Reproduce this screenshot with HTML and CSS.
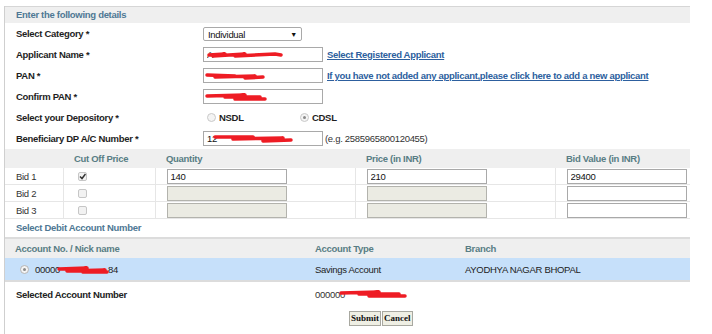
FILE: index.html
```html
<!DOCTYPE html>
<html lang="en">
<head>
<meta charset="UTF-8">
<title>IPO Application</title>
<link rel="stylesheet" href="styles.css">
</head>
<body>

<div class="panel">
  <div class="section-head">Enter the following details</div>

  <div class="form-grid">
    <div class="lbl">Select Category *</div>
    <div class="fld">
      <div class="select">Individual <span class="caret">&#9660;</span></div>
    </div>

    <div class="lbl">Applicant Name *</div>
    <div class="fld">
      <div class="masked">
        <input class="txt" type="text" value="A">
        <svg class="scribble" width="80" height="10" viewBox="0 0 80 10"><path d="M4 5 L20 4 L8 6 L40 4 L30 6 L70 4 L76 5" /></svg>
      </div>
      <a class="link" href="#">Select Registered Applicant</a>
    </div>

    <div class="lbl">PAN *</div>
    <div class="fld">
      <div class="masked">
        <input class="txt" type="text" value="">
        <svg class="scribble" width="80" height="10" viewBox="0 0 80 10"><path d="M2 4 L30 5 L10 6 L50 5 L40 7 L58 6" /></svg>
      </div>
      <a class="link" href="#">If you have not added any applicant,please click here to add a new applicant</a>
    </div>

    <div class="lbl">Confirm PAN *</div>
    <div class="fld">
      <div class="masked">
        <input class="txt" type="text" value="">
        <svg class="scribble" width="80" height="10" viewBox="0 0 80 10"><path d="M2 4 L40 3 L20 5 L55 5 L30 7 L60 7" /></svg>
      </div>
    </div>

    <div class="lbl">Select your Depository *</div>
    <div class="fld">
      <label class="opt"><span class="radio"></span>NSDL</label>
      <label class="opt opt-cdsl"><span class="radio on"></span>CDSL</label>
    </div>

    <div class="lbl">Beneficiary DP A/C Number *</div>
    <div class="fld">
      <div class="masked">
        <input class="txt" type="text" value="12">
        <svg class="scribble sc-dp" width="80" height="10" viewBox="0 0 80 10"><path d="M2 3 L40 3 L20 5 L70 4 L50 7 L78 6" /></svg>
      </div>
      <span class="hint">(e.g. 2585965800120455)</span>
    </div>
  </div>

  <table class="bids">
    <colgroup>
      <col class="c-bid"><col class="c-cut"><col class="c-qty"><col class="c-price"><col class="c-val">
    </colgroup>
    <tr class="head">
      <th></th><th>Cut Off Price</th><th>Quantity</th><th>Price (in INR)</th><th>Bid Value (in INR)</th>
    </tr>
    <tr>
      <td>Bid 1</td>
      <td><span class="check on"><svg width="7" height="7" viewBox="0 0 7 7"><path d="M1 3.5 L3 5.5 L6.5 1" /></svg></span></td>
      <td><input class="txt" type="text" value="140"></td>
      <td><input class="txt" type="text" value="210"></td>
      <td><input class="txt" type="text" value="29400"></td>
    </tr>
    <tr>
      <td>Bid 2</td>
      <td><span class="check"></span></td>
      <td><input class="txt off" type="text" disabled></td>
      <td><input class="txt off" type="text" disabled></td>
      <td><input class="txt" type="text"></td>
    </tr>
    <tr>
      <td>Bid 3</td>
      <td><span class="check"></span></td>
      <td><input class="txt off" type="text" disabled></td>
      <td><input class="txt off" type="text" disabled></td>
      <td><input class="txt" type="text"></td>
    </tr>
  </table>

  <div class="sub-head">Select Debit Account Number</div>

  <table class="accounts">
    <colgroup>
      <col class="c-acc"><col class="c-type"><col class="c-branch">
    </colgroup>
    <tr class="head">
      <th>Account No. / Nick name</th><th>Account Type</th><th>Branch</th>
    </tr>
    <tr class="picked">
      <td class="acc-no">
        <span class="radio on"></span>
        <span class="masked">00000<span class="blank"></span>84
          <svg class="scribble sc-acc" width="60" height="10" viewBox="0 0 60 10"><path d="M2 4 L30 3 L10 6 L48 5 L26 7 L50 7" /></svg>
        </span>
      </td>
      <td>Savings Account</td>
      <td>AYODHYA NAGAR BHOPAL</td>
    </tr>
  </table>

  <div class="selected">
    <div class="sel-lbl">Selected Account Number</div>
    <div class="sel-val masked">000000
      <svg class="scribble sc-sel" width="96" height="10" viewBox="0 0 96 10"><path d="M2 4 L40 3 L20 5 L60 5 L30 7 L66 7" /></svg>
    </div>
  </div>

  <div class="actions">
    <button class="btn">Submit</button><button class="btn">Cancel</button>
  </div>
</div>

</body>
</html>
```

FILE: styles.css
```css
body {
  margin: 0;
  font-family: "Liberation Sans", Arial, sans-serif;
  font-size: 9.5px;
  letter-spacing: -0.3px;
  color: #222;
  background: #fff;
}
.panel {
  margin: 6px 0 0 4px;
  width: 686px;
  height: 328px;
  border-left: 1px solid #cfcfcf;
  box-sizing: border-box;
}
.section-head {
  height: 16px;
  line-height: 16px;
  background: #efefef;
  border-top: 1px solid #d6d6d6;
  padding-left: 11px;
  color: #4e7894;
  font-weight: bold;
}
.form-grid {
  display: grid;
  grid-template-columns: 187px 1fr;
  grid-auto-rows: 21px;
  padding-left: 11px;
}
.lbl {
  font-weight: bold;
  color: #1e1e1e;
  display: flex;
  align-items: center;
}
.fld {
  display: flex;
  align-items: center;
}
.select {
  width: 99px;
  height: 14px;
  line-height: 13px;
  border: 1px solid #a9a9a9;
  border-radius: 2px;
  padding-left: 4px;
  box-sizing: border-box;
  position: relative;
  color: #111;
}
.caret {
  position: absolute;
  right: 4px;
  top: 0;
  font-size: 7px;
}
.masked {
  position: relative;
  display: inline-block;
}
.txt {
  width: 120px;
  height: 15px;
  border: 1px solid #a9a9a9;
  padding: 0 3px;
  box-sizing: border-box;
  font-family: "Liberation Sans", Arial, sans-serif;
  font-size: 9.5px;
  letter-spacing: -0.3px;
  color: #111;
  background: #fff;
  display: block;
}
.txt.off {
  background: #ebebe3;
  border-color: #b3b3ad;
}
.scribble {
  position: absolute;
  left: 2px;
  top: 3px;
}
.scribble path {
  fill: none;
  stroke: #ee1c24;
  stroke-width: 3.5;
  stroke-linecap: round;
  stroke-linejoin: round;
}
.sc-dp {
  left: 10px;
}
.link {
  margin-left: 4px;
  color: #2d5f9e;
  font-weight: bold;
}
.hint {
  margin-left: 2px;
  color: #333;
}
.opt {
  display: flex;
  align-items: center;
  font-weight: bold;
  color: #1e1e1e;
  margin-left: 4px;
  width: 89px;
}
.radio {
  display: inline-block;
  width: 7px;
  height: 7px;
  border: 1px solid #c9c9c9;
  border-radius: 50%;
  background: #f4f4f4;
  margin-right: 3px;
  position: relative;
}
.radio.on::after {
  content: "";
  position: absolute;
  left: 2px;
  top: 2px;
  width: 3px;
  height: 3px;
  border-radius: 50%;
  background: #8a8a8a;
}
.bids, .accounts {
  width: 685px;
  border-collapse: collapse;
  table-layout: fixed;
}
.c-bid { width: 58px; }
.c-cut { width: 92px; }
.c-qty { width: 200px; }
.c-price { width: 200px; }
.c-val { width: 135px; }
.bids th {
  height: 19px;
  background: #efefef;
  text-align: left;
  padding: 0 0 0 11px;
  color: #587d84;
  font-weight: bold;
}
.bids td {
  height: 16px;
  padding: 0 0 0 11px;
  border-bottom: 1px solid #e6e6e6;
  border-left: 1px solid #e6e6e6;
  color: #333;
}
.bids td:first-child {
  border-left: none;
}
.check {
  display: block;
  width: 9px;
  height: 9px;
  margin-left: 3px;
  border: 1px solid #c6c6c6;
  border-radius: 2px;
  background: #f2f2f2;
  box-sizing: border-box;
  position: relative;
}
.check svg {
  position: absolute;
  left: 0;
  top: 0;
}
.check path {
  fill: none;
  stroke: #333;
  stroke-width: 1.5;
}
.sub-head {
  height: 18px;
  line-height: 18px;
  padding-left: 11px;
  color: #4e7894;
  font-weight: bold;
}
.c-acc { width: 300px; }
.c-type { width: 150px; }
.c-branch { width: 235px; }
.accounts {
  border-top: 2px solid #dcdcdc;
  border-bottom: 2px solid #dcdcdc;
}
.accounts th {
  height: 19px;
  background: #efefef;
  text-align: left;
  padding: 0 0 0 10px;
  color: #587d84;
  font-weight: bold;
}
.accounts td {
  height: 22px;
  padding: 0 0 0 10px;
  color: #222;
}
.picked td {
  background: #c6e0fa;
}
.acc-no {
  display: flex;
  align-items: center;
}
.acc-no .radio {
  margin-left: 5px;
  margin-right: 6px;
  border-color: #b5b5b5;
}
.blank {
  display: inline-block;
  width: 48px;
}
.sc-acc {
  left: 22px;
  top: 1px;
}
.selected {
  display: flex;
  align-items: center;
  height: 24px;
  padding-left: 11px;
}
.sel-lbl {
  width: 299px;
  font-weight: bold;
}
.sel-val {
  color: #333;
}
.sc-sel {
  left: 24px;
  top: 0;
}
.actions {
  display: flex;
  padding: 5px 0 0 344px;
  gap: 1px;
}
.btn {
  height: 15px;
  padding: 0 1px;
  border: 1px solid #a8a8a0;
  background: #efefe4;
  font-family: "Liberation Serif", serif;
  font-size: 9px;
  font-weight: bold;
  letter-spacing: 0;
  color: #111;
  line-height: 13px;
}
```
